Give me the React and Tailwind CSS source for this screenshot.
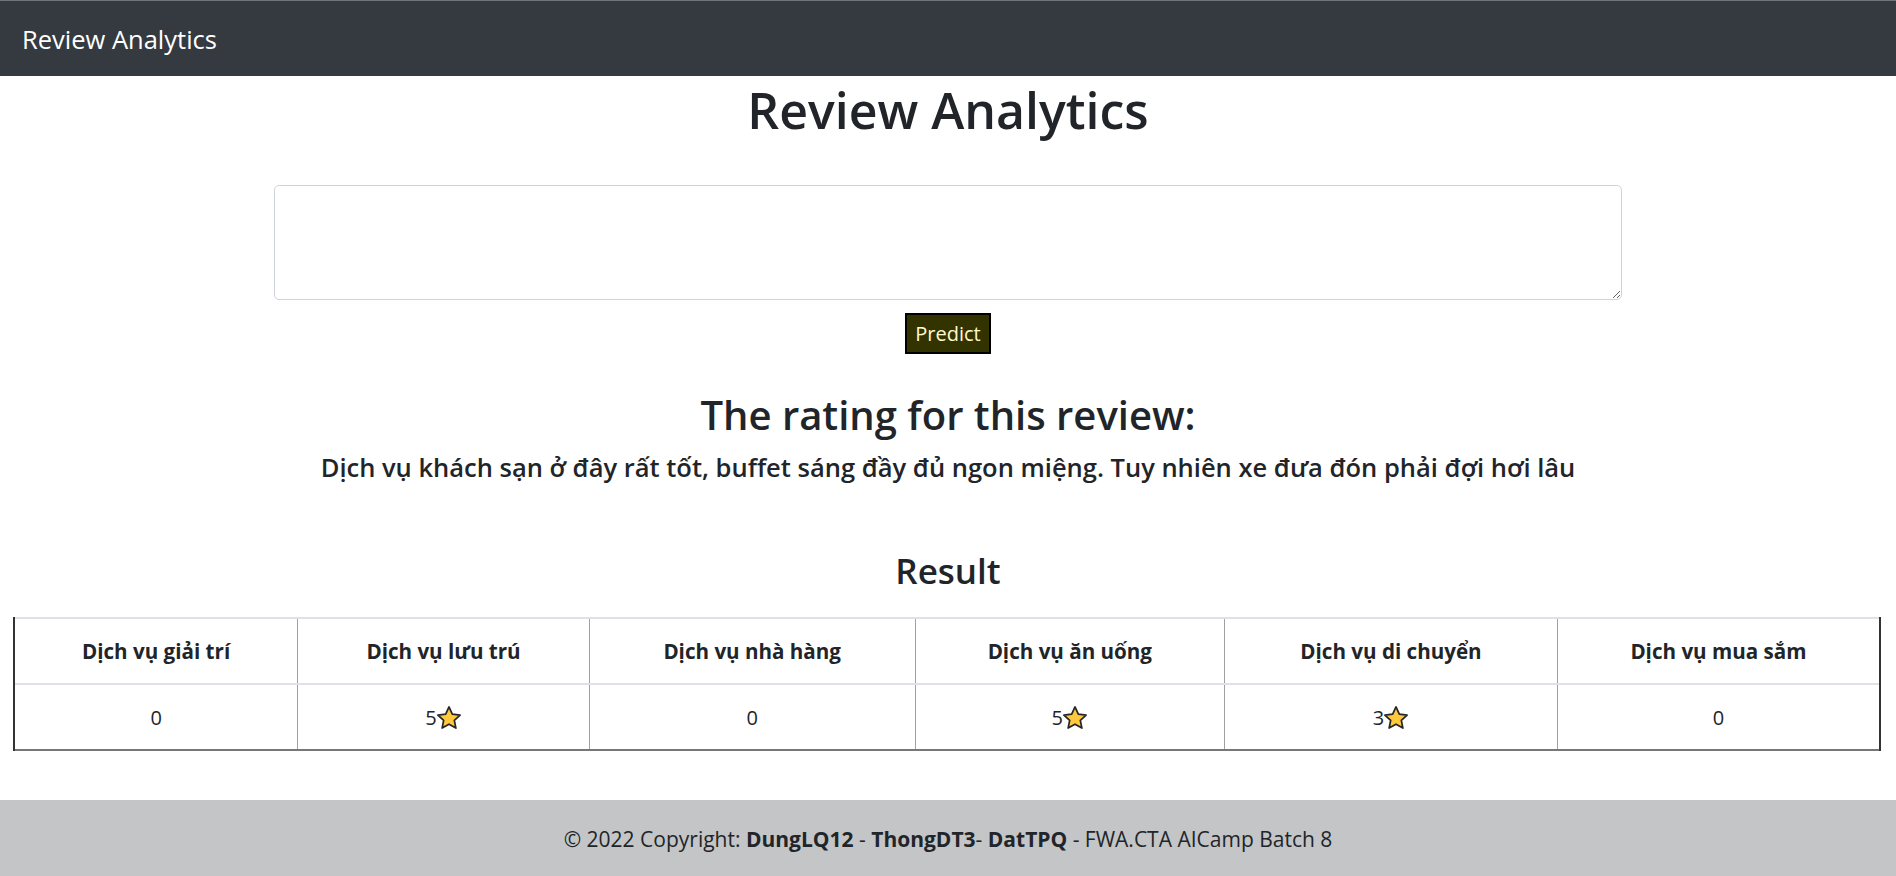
import React, { useState } from "react";

const columns = [
    { name: "Dịch vụ giải trí", score: 0, width: "w-[284px]" },
    { name: "Dịch vụ lưu trú", score: 5, width: "w-[292px]" },
    { name: "Dịch vụ nhà hàng", score: 0, width: "w-[326px]" },
    { name: "Dịch vụ ăn uống", score: 5, width: "w-[310px]" },
    { name: "Dịch vụ di chuyển", score: 3, width: "w-[333px]" },
    { name: "Dịch vụ mua sắm", score: 0, width: "w-[323px]" },
];

function Star() {
    return (
        <svg viewBox="0 0 24 24" className="w-[26px] h-[26px] inline-block align-[-6px] -ml-[1px]">
            <path
                d="M12 1.8l3.05 6.6 7.2.85-5.33 4.93 1.43 7.12L12 17.7l-6.35 3.6 1.43-7.12L1.75 9.25l7.2-.85z"
                fill="#ffc83d"
                stroke="#262626"
                strokeWidth="1.6"
                strokeLinejoin="round"
            />
        </svg>
    );
}

export default function App() {
    const [review, setReview] = useState("");

    return (
        <div className="min-h-screen flex flex-col bg-white text-[#212529] font-['Open_Sans',sans-serif]">
            <nav className="h-[76px] bg-[#343a40] border-t border-[#6c757d] flex items-center px-[22px]">
                <span className="text-white text-[25.5px] leading-none mt-[2px]">Review Analytics</span>
            </nav>

            <main className="flex flex-col items-center">
                <h1 className="text-[50px] leading-[62px] font-semibold mt-[3px]">Review Analytics</h1>

                <textarea
                    className="mt-[44px] w-[1348px] h-[115px] border border-[#ced4da] rounded-[5px] px-3 py-2 text-[20px] outline-none resize"
                    value={review}
                    onChange={(e) => setReview(e.target.value)}
                />

                <button className="mt-[13px] w-[86px] h-[41px] bg-[#333300] border-2 border-black text-[#fffacd] text-[20px] leading-none">
                    Predict
                </button>

                <h2 className="mt-[37px] text-[40px] leading-[48px] font-semibold">The rating for this review:</h2>
                <h5 className="mt-[13px] text-[25.5px] leading-[30px] font-semibold">
                    Dịch vụ khách sạn ở đây rất tốt, buffet sáng đầy đủ ngon miệng. Tuy nhiên xe đưa đón phải đợi hơi lâu
                </h5>

                <h3 className="mt-[68px] text-[35px] leading-[42px] font-semibold">Result</h3>

                <div className="mt-[25px] w-full px-[13px]">
                    <table className="w-[1868px] border-collapse text-center text-[20px]">
                        <thead>
                            <tr className="h-[66px] border-t-2 border-t-[#dee2e6] border-b-2 border-b-[#dee2e6]">
                                {columns.map((c, i) => (
                                    <th
                                        key={c.name}
                                        className={`${c.width} text-[20.6px] font-bold border-l border-[#a0a0a0] ${i === 0 ? "border-l-2 border-l-[#333]" : ""} ${i === columns.length - 1 ? "border-r-2 border-r-[#333]" : ""}`}
                                    >
                                        {c.name}
                                    </th>
                                ))}
                            </tr>
                        </thead>
                        <tbody>
                            <tr className="h-[66px] border-b-2 border-b-[#777]">
                                {columns.map((c, i) => (
                                    <td
                                        key={c.name}
                                        className={`pt-[2px] border-l border-[#a0a0a0] ${i === 0 ? "border-l-2 border-l-[#333]" : ""} ${i === columns.length - 1 ? "border-r-2 border-r-[#333]" : ""}`}
                                    >
                                        {c.score}
                                        {c.score > 0 && <Star />}
                                    </td>
                                ))}
                            </tr>
                        </tbody>
                    </table>
                </div>
            </main>

            <footer className="mt-auto h-[76px] bg-[#c4c5c7] flex items-center justify-center text-[21px]">
                <span className="mt-[3px]">
                    © 2022 Copyright: <b>DungLQ12</b> - <b>ThongDT3</b>- <b>DatTPQ</b> - FWA.CTA AICamp Batch 8
                </span>
            </footer>
        </div>
    );
}
